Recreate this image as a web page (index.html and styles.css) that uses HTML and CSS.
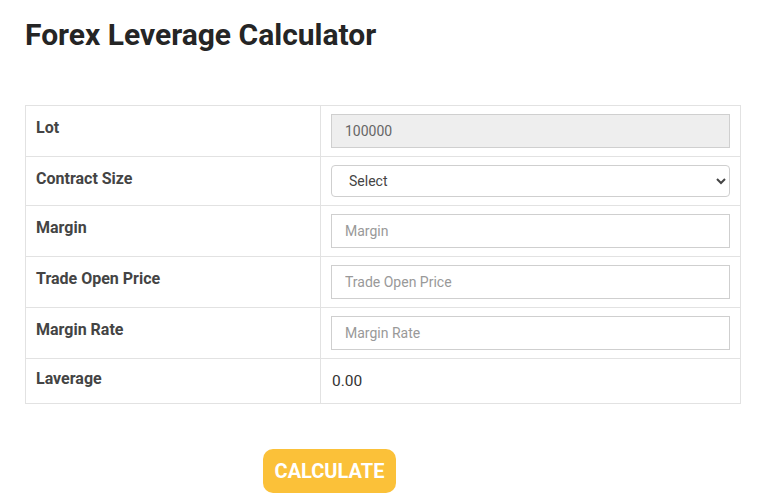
FILE: index.html
```html
<!DOCTYPE html>
<html>
<head>
<meta charset="utf-8">
<link rel="stylesheet" href="styles.css">
</head>
<body>
<div class="page">
  <h1 class="title">Forex Leverage Calculator</h1>
  <table class="calc">
    <tr>
      <th>Lot</th>
      <td class="field"><input class="inp inp-ro" type="text" value="100000" readonly></td>
    </tr>
    <tr>
      <th>Contract Size</th>
      <td class="field sel-cell"><select class="sel"><option>Select</option></select></td>
    </tr>
    <tr>
      <th>Margin</th>
      <td class="field"><input class="inp" type="text" placeholder="Margin"></td>
    </tr>
    <tr>
      <th>Trade Open Price</th>
      <td class="field"><input class="inp" type="text" placeholder="Trade Open Price"></td>
    </tr>
    <tr>
      <th>Margin Rate</th>
      <td class="field"><input class="inp" type="text" placeholder="Margin Rate"></td>
    </tr>
    <tr>
      <th class="last-label">Laverage</th>
      <td class="result">0.00</td>
    </tr>
  </table>
  <div class="actions">
    <button class="btn">CALCULATE</button>
  </div>
</div>
</body>
</html>
```
FILE: styles.css
```css
html, body {
  margin: 0;
  padding: 0;
  background: #ffffff;
}
body {
  font-family: Roboto, "Liberation Sans", sans-serif;
  color: #333;
}
.page {
  padding: 0 20px 0 25px;
}
.title {
  margin: 17px 0 52px 0;
  font-size: 30px;
  line-height: 36px;
  font-weight: 700;
  color: #252525;
}
.calc {
  width: 716px;
  border-collapse: collapse;
  border: 1px solid #e2e2e2;
}
.calc th, .calc td {
  border: 1px solid #e2e2e2;
}
.calc th {
  width: 274px;
  text-align: left;
  vertical-align: top;
  padding: 12px 10px;
  font-size: 16px;
  line-height: 20px;
  font-weight: 700;
  color: #444;
}
.calc th.last-label {
  padding: 10px 10px 14px 10px;
}
.field {
  padding: 8px 10px 8px 10px;
  vertical-align: middle;
}
.inp {
  display: block;
  box-sizing: border-box;
  width: 100%;
  height: 34px;
  margin: 0;
  padding: 0 13px;
  border: 1px solid #cfcfcf;
  border-radius: 0;
  font-family: Roboto, "Liberation Sans", sans-serif;
  font-size: 14px;
  color: #666;
  background: #fff;
  outline: none;
}
.inp::placeholder {
  color: #999;
}
.inp-ro {
  background: #eeeeee;
  color: #666;
}
.sel {
  display: block;
  box-sizing: border-box;
  width: 100%;
  height: 32px;
  margin: 0;
  padding: 0 10px 0 13px;
  border: 1px solid #cfcfcf;
  border-radius: 4px;
  font-family: Roboto, "Liberation Sans", sans-serif;
  font-size: 14px;
  color: #444;
  background: #fff;
}
.result {
  padding: 12px 11px;
  font-size: 15.5px;
  line-height: 20px;
  color: #333;
  vertical-align: top;
}
.actions {
  padding: 45px 0 0 238px;
}
.btn {
  box-sizing: border-box;
  height: 44px;
  width: 133px;
  padding: 0;
  border: none;
  border-radius: 10px;
  background: #fbc139;
  color: #ffffff;
  font-family: Roboto, "Liberation Sans", sans-serif;
  font-size: 20px;
  font-weight: 700;
  cursor: pointer;
}
```
